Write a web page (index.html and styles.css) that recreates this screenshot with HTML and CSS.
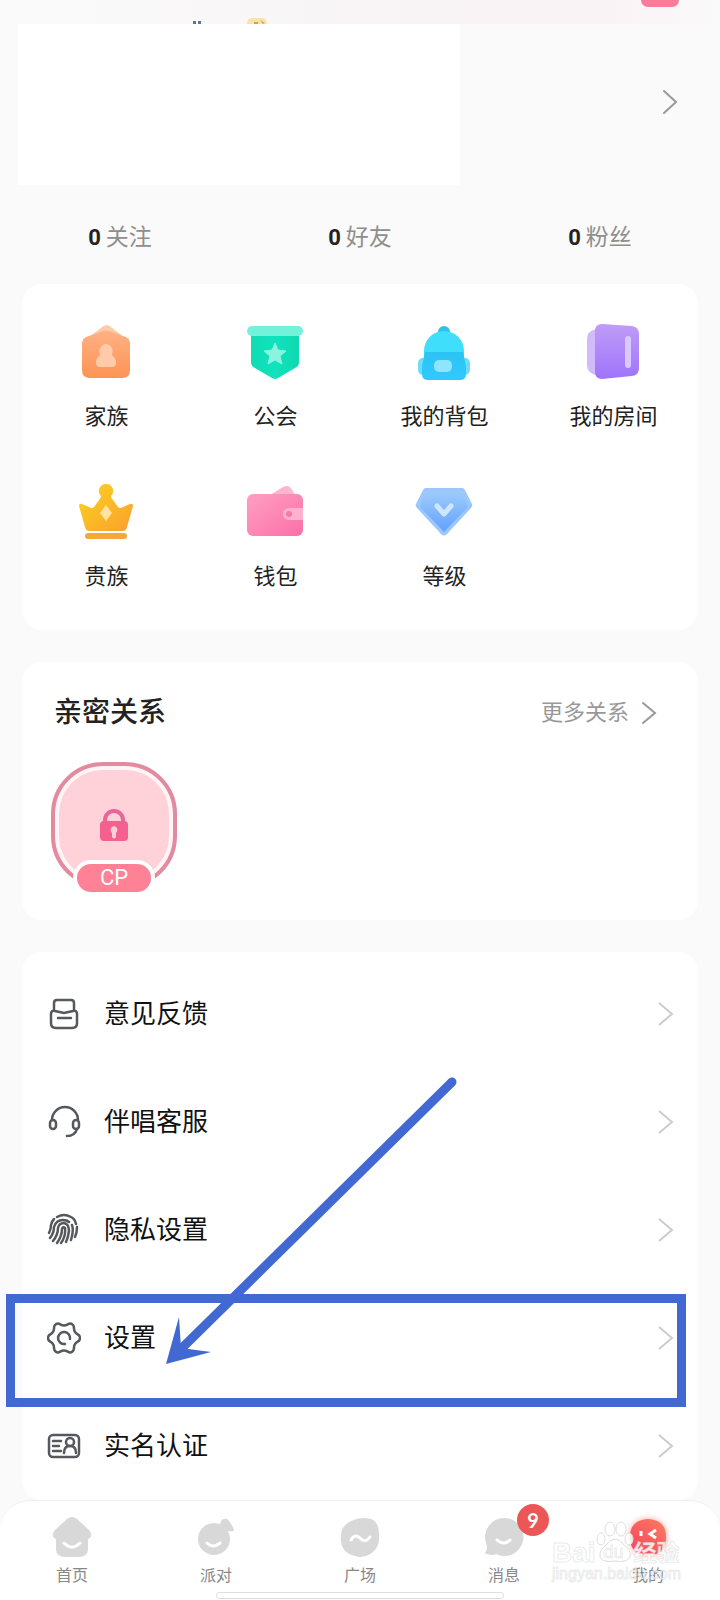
FILE: index.html
```html
<!DOCTYPE html>
<html lang="zh-CN">
<head>
    <meta charset="UTF-8">
    <meta name="viewport" content="width=device-width, initial-scale=1.0">
    <title>我的</title>

    <link rel="stylesheet" href="styles.css">
</head>
<body>

    <svg class="defs" width="0" height="0" aria-hidden="true">
        <defs>
            <linearGradient id="orange" x1="0" y1="0" x2="0" y2="1"><stop offset="0" stop-color="#ffb183"/><stop offset="1" stop-color="#fd9355"/></linearGradient>
            <linearGradient id="green" x1="0" y1="0" x2="1" y2="0"><stop offset="0" stop-color="#0fdcb4"/><stop offset=".5" stop-color="#10e3bd"/><stop offset="1" stop-color="#0ed8ae"/></linearGradient>
            <linearGradient id="sky" x1="0" y1="0" x2="0" y2="1"><stop offset="0" stop-color="#2cc3f4"/><stop offset="1" stop-color="#2fcaff"/></linearGradient>
            <linearGradient id="purple" x1="0" y1="0" x2="0" y2="1"><stop offset="0" stop-color="#bf9df8"/><stop offset="1" stop-color="#9f73fb"/></linearGradient>
            <linearGradient id="gold" x1="0" y1="0" x2="1" y2="1"><stop offset="0" stop-color="#fbd41e"/><stop offset="1" stop-color="#fa9f2e"/></linearGradient>
            <linearGradient id="pink" x1="0" y1="0" x2="1" y2="1"><stop offset="0" stop-color="#ff9fc0"/><stop offset="1" stop-color="#fb70a8"/></linearGradient>
            <linearGradient id="blue" x1="0" y1="0" x2="0" y2="1"><stop offset="0" stop-color="#9dcbfb"/><stop offset="1" stop-color="#62a1ff"/></linearGradient>
            <linearGradient id="red" x1="1" y1="0" x2="0" y2="1"><stop offset="0" stop-color="#fb7e61"/><stop offset="1" stop-color="#f9405c"/></linearGradient>
        </defs>
    </svg>

    <div class="page">

        <header class="profile">
            <span class="ribbon"></span>
            <div class="profile-card">
                <svg class="status-bits" width="76" height="6" viewBox="0 0 76 6"><path d="M0 3h3v3H0zM5 3h3v3H5z" fill="#5674a8"/><path d="M54 6q0-6 5-6h10q5 0 5 6z" fill="#fbe3a4"/><path d="M61 4h4v2h-4zM67 2l5 3-2 1z" fill="#c9a45c"/></svg>
            </div>
            <a href="#" class="profile-link" aria-label="个人资料">
                <svg width="16" height="26" viewBox="0 0 16 26"><path d="M2 2l12 11L2 24" fill="none" stroke="#999" stroke-width="2" stroke-linecap="round"/></svg>
            </a>
        </header>

        <div class="stats">
            <a href="#" class="stat"><b>0</b>关注</a>
            <a href="#" class="stat"><b>0</b>好友</a>
            <a href="#" class="stat"><b>0</b>粉丝</a>
        </div>

        <main class="cards">

            <section class="card grid">
                <a href="#" class="tool">
                    <svg width="60" height="60" viewBox="0 0 60 60">
                        <path d="M6 20L25 5q5-4 9 0l19 15v10H6z" fill="#ffcba9"/>
                        <path d="M5 22q0-5 4-7l17-6q3-1 6 0l17 6q4 2 4 7v26q0 8-8 8H13q-8 0-8-8z" fill="url(#orange)"/>
                        <path d="M29 22a7 7 0 0 1 6 10q0 2 2 3 2 2 2 6 0 4-4 4H23q-4 0-4-4 0-4 2-6 2-1 2-3a7 7 0 0 1 6-10z" fill="#ffcaaa"/>
                    </svg>
                    家族
                </a>
                <a href="#" class="tool">
                    <svg width="60" height="60" viewBox="0 0 60 60">
                        <path d="M5 10h48v30q0 4-4 6L32 56q-3 2-6 0L9 46q-4-2-4-6z" fill="url(#green)"/>
                        <rect x="1" y="4" width="56" height="10" rx="5" fill="#72f2da"/>
                        <path d="M29 21l3 7 8 1-6 5 2 8-7-4-7 4 2-8-6-5 8-1z" fill="#8bf4e0" stroke="#8bf4e0" stroke-linejoin="round"/>
                    </svg>
                    公会
                </a>
                <a href="#" class="tool">
                    <svg width="60" height="60" viewBox="0 0 60 60">
                        <circle cx="29" cy="10" r="6" fill="#2cc0ef"/>
                        <rect x="3" y="36" width="10" height="17" rx="5" fill="#6edcfb"/><rect x="45" y="36" width="10" height="17" rx="5" fill="#6edcfb"/>
                        <path d="M9 34v-5a20 20 0 0 1 40 0v5z" fill="#3fdefb"/>
                        <path d="M10 30h38l3 14v8q0 6-6 6H13q-6 0-6-6v-8z" fill="url(#sky)"/>
                        <rect x="19" y="38" width="18" height="12" rx="5" fill="#8fe4ff"/>
                    </svg>
                    我的背包
                </a>
                <a href="#" class="tool">
                    <svg width="60" height="60" viewBox="0 0 60 60">
                        <path d="M12 7q-9 2-9 10v26q0 8 9 10z" fill="#d2bbfa"/>
                        <path d="M18 2l30 2q7 1 7 8v34q0 7-7 8l-30 3q-7 0-7-7V9q0-7 7-7z" fill="url(#purple)"/>
                        <rect x="41" y="14" width="6" height="32" rx="3" fill="#dac8ff"/>
                    </svg>
                    我的房间
                </a>
                <a href="#" class="tool">
                    <svg width="60" height="60" viewBox="0 0 60 60">
                        <path d="M29 2a7 7 0 0 1 5 12q0 2 2 4l5 7q2 2 5 0l7-3q3-1 3 2l-6 21q-1 4-4 4H12q-3 0-4-4L2 24q0-3 3-2l7 3q3 2 5 0l5-7q2-2 2-4a7 7 0 0 1 5-12z" fill="url(#gold)"/>
                        <rect x="8" y="51" width="42" height="6" rx="3" fill="#f3a83b"/>
                        <path d="M29 23l6 8-6 8-6-8z" fill="#ffe3a2"/>
                    </svg>
                    贵族
                </a>
                <a href="#" class="tool">
                    <svg width="60" height="60" viewBox="0 0 60 60">
                        <path d="M24 13l13-8q6-3 9 3l3 5z" fill="#ffb4d0"/>
                        <rect x="1" y="12" width="56" height="42" rx="6" fill="url(#pink)"/>
                        <path d="M57 26H43a6 6 0 0 0 0 12h14z" fill="#ffb1cf"/><circle cx="43" cy="32" r="3" fill="#f878a9"/>
                    </svg>
                    钱包
                </a>
                <a href="#" class="tool">
                    <svg width="60" height="60" viewBox="0 0 60 60">
                        <path d="M11 6h36q2 0 3 2l7 14q1 2-1 4L32 52q-3 3-6 0L2 26q-2-2-1-4l7-14q1-2 3-2z" fill="#9bc7fc"/>
                        <path d="M5 25l5-15h38l5 15-24 25z" fill="url(#blue)"/>
                        <path d="M22 24l7 8 7-8" fill="none" stroke="#cfe6ff" stroke-width="5" stroke-linecap="round" stroke-linejoin="round"/>
                    </svg>
                    等级
                </a>
            </section>

            <section class="card relation">
                <div class="relation-head">
                    <h2>亲密关系</h2>
                    <a href="#" class="more">更多关系
                        <svg width="16" height="26" viewBox="0 0 16 26"><path d="M2 3l12 10L2 23" fill="none" stroke="#999" stroke-width="2" stroke-linecap="round"/></svg>
                    </a>
                </div>
                <button class="cp">
                    <span class="cp-frame">
                        <svg width="30" height="34" viewBox="0 0 30 34"><path d="M6 15v-3a9 9 0 0 1 18 0v3" fill="none" stroke="#e76597" stroke-width="4"/><rect x="1" y="13" width="28" height="20" rx="4" fill="#f4608f"/><path d="M15 18a4 4 0 0 1 2 7v4q-2 3-4 0v-4a4 4 0 0 1 2-7z" fill="#fdd0d9"/></svg>
                    </span>
                    <span class="cp-name">CP</span>
                </button>
            </section>

            <nav class="card menu">
                <a href="#" class="row">
                    <svg class="row-icon" viewBox="0 0 34 34"><path d="M7 13V6q0-3 3-3h14q3 0 3 3v7M4 17q0-4 4-3l9 2 9-2q4-1 4 3v9q0 5-5 5H9q-5 0-5-5zM11 21h13"/></svg>
                    <span>意见反馈</span>
                    <svg class="arrow" viewBox="0 0 16 26"><path d="M1 2l13 11L1 24"/></svg>
                </a>
                <a href="#" class="row">
                    <svg class="row-icon" viewBox="0 0 34 34"><path d="M5 15a13 13 0 0 1 26 0"/><rect x="3" y="15" width="6" height="9" rx="3"/><rect x="26" y="15" width="6" height="9" rx="3"/><path d="M30 24q-2 7-10 7"/></svg>
                    <span>伴唱客服</span>
                    <svg class="arrow" viewBox="0 0 16 26"><path d="M1 2l13 11L1 24"/></svg>
                </a>
                <a href="#" class="row">
                    <svg class="row-icon" viewBox="0 0 34 34"><path d="M10 4q7-4 14 0 4 2 5 7M2 20q2-4 2-8 1-4 3-6M3 25q4-5 4-11Q9 7 16 7q4 0 6 2M25 12q2 5-1 15M6 28q5-6 5-13 1-5 6-5 5 1 5 8-1 7-3 11M10 30q5-7 5-14 1-3 3-1 1 8-4 15M30 14q0 6-2 10"/></svg>
                    <span>隐私设置</span>
                    <svg class="arrow" viewBox="0 0 16 26"><path d="M1 2l13 11L1 24"/></svg>
                </a>
                <a href="#" class="row">
                    <svg class="row-icon" viewBox="0 0 34 34"><path d="M27.8 10.7C29.8 14.2 33 13 33 17S29.8 19.8 27.8 23.3 28.5 28.9 25 30.9 21 29.5 17 29.5 12.5 32.9 9 30.9 8.2 26.8 6.2 23.3 1 21 1 17 4.2 14.2 6.2 10.7 5.5 5.1 9 3.1 13 4.5 17 4.5 21.5 1.1 25 3.1 25.8 7.2 27.8 10.7z"/><path d="M18 23a6 6 0 1 1 5-5"/></svg>
                    <span>设置</span>
                    <svg class="arrow" viewBox="0 0 16 26"><path d="M1 2l13 11L1 24"/></svg>
                </a>
                <a href="#" class="row">
                    <svg class="row-icon" viewBox="0 0 34 34"><rect x="2" y="6" width="30" height="22" rx="4"/><path d="M6 12h8M6 17h6M6 22h8M17 24q0-7 6-7t6 7"/><circle cx="23" cy="13" r="4"/></svg>
                    <span>实名认证</span>
                    <svg class="arrow" viewBox="0 0 16 26"><path d="M1 2l13 11L1 24"/></svg>
                </a>

                <!-- highlight on the settings row -->
                <div class="mark-box"></div>
                <svg class="mark-arrow" width="300" height="296" viewBox="0 0 300 296"><path d="M290 10L20 276" stroke="#4169d1" stroke-width="9" stroke-linecap="round"/><path d="M4 292L17 245l2 31 30 4z" fill="#4169d1"/></svg>
            </nav>

        </main>

        <nav class="tabbar">
            <a href="#" class="tab">
                <svg width="40" height="42" viewBox="0 0 40 42"><path d="M15 3q5-4 10 0l12 11q3 3 2 6 0 2-3 3v10q0 8-10 8H14Q4 41 4 33V23q-3-1-3-3-1-3 2-6z" fill="#d8d8d8"/><path d="M12 27q8 8 16 0" fill="none" stroke="#fff" stroke-width="3" stroke-linecap="round"/></svg>
                首页
            </a>
            <a href="#" class="tab">
                <svg width="40" height="42" viewBox="0 0 40 42"><circle cx="18" cy="23" r="16" fill="#d8d8d8"/><path d="M23 12l2-7q2-3 6-2 4 3 7 11 0 2-6 1l-1 6z" fill="#d8d8d8"/><path d="M11 27q6 6 13 0" fill="none" stroke="#fff" stroke-width="3" stroke-linecap="round"/></svg>
                派对
            </a>
            <a href="#" class="tab">
                <svg width="40" height="42" viewBox="0 0 40 42"><path d="M11 5q10-5 20-2 8 3 8 15 1 12-6 18-9 7-18 4Q2 37 1 25-1 11 11 5z" fill="#d8d8d8"/><path d="M11 24q4-7 9-2 5 6 10-1" fill="none" stroke="#fff" stroke-width="3" stroke-linecap="round"/></svg>
                广场
            </a>
            <a href="#" class="tab">
                <svg width="40" height="42" viewBox="0 0 40 42"><path d="M20 2a19 19 0 1 1-8 36q-3 2-9 0-3 0-1-3 2-3 0-8A19 19 0 0 1 20 2z" fill="#d8d8d8"/><path d="M13 24q7 6 13 0" fill="none" stroke="#fff" stroke-width="3" stroke-linecap="round"/></svg>
                <span class="badge">9</span>
                消息
            </a>
            <a href="#" class="tab">
                <svg class="glow" width="40" height="42" viewBox="0 0 40 42"><path d="M20 3q18 1 18 18 0 18-18 18T2 21Q2 4 20 3z" fill="url(#red)"/><path d="M13 15v5M28 14l-6 4 6 4" fill="none" stroke="#fff" stroke-width="3"/></svg>
                我的
            </a>
            <div class="watermark">
                <div class="wm-logo">
                    <span>Bai</span>
                    <span class="paw"><svg width="38" height="42" viewBox="0 0 38 42"><ellipse cx="5" cy="18" rx="4" ry="6"/><ellipse cx="14" cy="8" rx="5" ry="7"/><ellipse cx="25" cy="8" rx="5" ry="7"/><ellipse cx="33" cy="18" rx="4" ry="6"/><path d="M19 18q5 0 9 6 8 5 6 12-3 6-15 4-13 2-15-4-1-7 6-12 4-6 9-6z"/></svg><i>du</i></span>
                    <span>经验</span>
                </div>
                <div class="wm-url">jingyan.baidu.com</div>
            </div>
            <span class="home-bar"></span>
        </nav>

    </div>

</body>
</html>
```

FILE: styles.css
```css
* {
    margin: 0;
    padding: 0;
    box-sizing: border-box;
}

body {
    background-color: #fafafa;
    color: #222;
    font-family: "Liberation Sans", "Noto Sans CJK SC", sans-serif;
}

a {
    color: inherit;
    text-decoration: none;
}

.defs {
    position: absolute;
}

.page {
    position: relative;
    overflow: hidden;
    background: linear-gradient(to right, #fafafa 10%, #f8f3f5 60%, #faf3f5 85%, #fafafa) top / 100% 24px no-repeat;
}

.profile {
    display: flex;
    align-items: center;
    justify-content: space-between;
    padding: 24px 42px 0 18px;
}

.ribbon {
    position: absolute;
    top: 0;
    right: 41px;
    width: 38px;
    height: 7px;
    border-radius: 0 0 7px 7px;
    background-color: #fb7c98;
}

.profile-card {
    position: relative;
    width: 67%;
    height: 161px;
    background-color: white;
}

.status-bits {
    position: absolute;
    left: 175px;
    top: -6px;
}

.profile-link {
    display: flex;
    margin-bottom: 6px;
}

.stats {
    display: flex;
    padding: 33px 0 27px;
}

.stat {
    display: flex;
    flex: 1;
    align-items: center;
    justify-content: center;
    gap: 5px;
    font-size: 23px;
    line-height: 39px;
    color: #8e8e8e;
}

.stat b {
    font-family: Roboto, sans-serif;
    font-size: 22px;
    color: #222;
}

.cards {
    display: flex;
    flex-direction: column;
    gap: 32px;
    padding: 0 22px;
}

.card {
    background-color: white;
    border-radius: 20px;
}

.grid {
    display: grid;
    grid-template-columns: repeat(4, 1fr);
    row-gap: 48px;
    padding: 38px 0 36px;
}

.tool {
    display: flex;
    flex-direction: column;
    align-items: center;
    gap: 18px;
    font-size: 22px;
    line-height: 34px;
}

.relation {
    padding: 33px 41px 28px 28px;
}

.relation-head {
    display: flex;
    align-items: center;
    justify-content: space-between;
    padding-left: 4px;
}

h2 {
    font-size: 28px;
    line-height: 36px;
    font-weight: 500;
}

.more {
    display: flex;
    align-items: center;
    gap: 12px;
    font-size: 22px;
    line-height: 32px;
    color: #999;
}

.cp {
    display: flex;
    flex-direction: column;
    align-items: center;
    width: 128px;
    margin-top: 31px;
    border: none;
    background: none;
    font-family: inherit;
}

.cp-frame {
    display: flex;
    align-items: center;
    justify-content: center;
    width: 126px;
    height: 126px;
    border: 4px solid #e28a9f;
    border-radius: 52px;
    background-color: #ffd2d9;
    box-shadow: inset 0 0 0 4px #fff5f6;
}

.cp-name {
    width: 74px;
    margin-top: -24px;
    border-radius: 14px;
    background-color: #ff8195;
    box-shadow: 0 0 0 4px white;
    color: white;
    font-family: Roboto, sans-serif;
    font-size: 22px;
    line-height: 28px;
}

.menu {
    position: relative;
    padding: 8px 0 0;
}

.row {
    display: flex;
    align-items: center;
    gap: 23px;
    height: 108px;
    padding: 0 24px 0 25px;
    color: #111;
    font-size: 26px;
    line-height: 36px;
}

.row-icon {
    width: 34px;
    height: 34px;
    fill: none;
    stroke: #55585c;
    stroke-width: 2.5;
    stroke-linecap: round;
}

.arrow {
    width: 16px;
    height: 26px;
    margin-left: auto;
    fill: none;
    stroke: #ccc;
    stroke-width: 2;
}

.mark-box {
    position: absolute;
    left: -16px;
    right: 12px;
    top: 342px;
    height: 113px;
    border: 9px solid #4169d1;
}

.mark-arrow {
    position: absolute;
    left: 140px;
    top: 120px;
}

.tabbar {
    position: relative;
    display: flex;
    height: 100px;
    border-top: 1px solid #f0f0f0;
    border-radius: 30px 30px 0 0;
    background-color: white;
}

.tab {
    position: relative;
    display: flex;
    flex: 1;
    flex-direction: column;
    align-items: center;
    gap: 5px;
    padding-top: 15px;
    color: #888;
    font-size: 16px;
    line-height: 26px;
}

.badge {
    position: absolute;
    left: 50%;
    top: 3px;
    width: 32px;
    height: 32px;
    margin-left: 13px;
    border-radius: 50%;
    background-color: #ec5657;
    color: white;
    font-family: Lato, sans-serif;
    font-size: 20px;
    font-weight: bold;
    line-height: 32px;
    text-align: center;
}

.glow {
    filter: drop-shadow(0 0 3px #ff9c94);
}

.watermark {
    position: absolute;
    right: 36px;
    top: 20px;
    width: 132px;
    color: rgba(255, 255, 255, 0.85);
    -webkit-text-stroke: 1px rgba(205, 205, 205, 0.4);
    font-weight: bold;
}

.wm-logo {
    display: flex;
    align-items: flex-end;
    font-size: 28px;
    line-height: 24px;
}

.wm-logo span:last-child {
    font-size: 23px;
}

.paw {
    position: relative;
    height: 44px;
}

.paw svg {
    fill: rgba(255, 255, 255, 0.85);
    stroke: #ddd;
}

.paw i {
    position: absolute;
    left: 8px;
    top: 18px;
    font-size: 18px;
    line-height: 26px;
    font-style: normal;
    font-weight: normal;
}

.wm-url {
    font-size: 16px;
    line-height: 18px;
    font-weight: normal;
}

.home-bar {
    position: absolute;
    left: 30%;
    right: 30%;
    bottom: 1px;
    height: 7px;
    border: 1px solid #ddd;
    border-radius: 4px;
    background-color: white;
}
```
